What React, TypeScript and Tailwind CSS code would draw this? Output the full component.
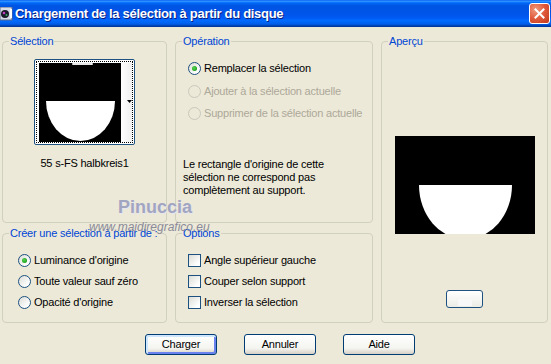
import React from "react";

function Radio({ checked = false, disabled = false }: { checked?: boolean; disabled?: boolean }) {
  return (
    <span
      className={
        "relative inline-flex items-center justify-center w-[13px] h-[13px] rounded-full border shrink-0 " +
        (disabled
          ? "border-[#CAC8BB] bg-[#ECE9D8]"
          : "border-[#1C5180] bg-[linear-gradient(135deg,#DCDCD7,#FFFFFF_80%)]")
      }
    >
      {checked && <span className="w-[5px] h-[5px] rounded-full bg-[radial-gradient(circle_at_40%_40%,#55D551,#21A121_70%)]" />}
    </span>
  );
}

function Check() {
  return (
    <span className="inline-block w-[13px] h-[13px] border border-[#1C5180] bg-[linear-gradient(135deg,#DCDCD7,#FFFFFF_80%)] shrink-0" />
  );
}

function Legend({ children }: { children: React.ReactNode }) {
  return <legend className="ml-[6px] px-[1px] text-[#0046D5] leading-[13px]">{children}</legend>;
}

function Btn({ children, def = false }: { children: React.ReactNode; def?: boolean }) {
  return (
    <button
      className={
        "w-[72px] h-[21px] rounded-[3px] border border-[#003C74] bg-[linear-gradient(to_bottom,#FFFFFF,#F4F4F0_70%,#D6D0C5)] text-[11px] leading-[13px] text-black " +
        (def ? "shadow-[inset_1px_1px_0_1px_#CEE7FF,inset_-1px_-1px_0_1px_#6982EE]" : "")
      }
    >
      {children}
    </button>
  );
}

export default function App() {
  return (
    <div className="relative w-[551px] h-[364px] overflow-hidden bg-[#ECE9D8] font-['Liberation_Sans',Arial,sans-serif] text-[11px] tracking-[-0.2px] text-black">
      {/* Title bar */}
      <div className="h-[27px] flex items-center bg-[linear-gradient(to_bottom,#0058EE_0%,#3593FF_4%,#288EFF_6%,#127DFF_8%,#036FFC_10%,#0262EE_14%,#0057E5_20%,#0054E3_24%,#0055EB_56%,#005BF5_66%,#026AFE_76%,#0062EF_86%,#0052D6_92%,#0040AB_96%,#003092_100%)]">
        <svg width="13" height="14" viewBox="0 0 13 14" className="ml-0 mt-[1px] shrink-0">
          <rect x="0" y="0" width="12" height="13" fill="#D8DCE6" stroke="#5A6A8A" strokeWidth="1" />
          <circle cx="5" cy="7" r="4" fill="#1A1A2A" />
          <circle cx="4" cy="6" r="1.3" fill="#C040C0" />
          <circle cx="6.5" cy="8" r="1" fill="#30B060" />
          <rect x="10" y="2" width="2" height="9" fill="#FFFFFF" />
        </svg>
        <span className="ml-[2px] text-white font-bold text-[13px] tracking-[-0.3px] [text-shadow:1px_1px_0_#0A1E80] font-['Liberation_Sans',Arial,sans-serif]">
          Chargement de la sélection à partir du disque
        </span>
        <div className="ml-auto mr-[1px] w-[21px] h-[21px] rounded-[3px] border border-white bg-[radial-gradient(circle_at_30%_30%,#F09A7C,#E0583A_50%,#C0391B)] flex items-center justify-center">
          <svg width="11" height="11" viewBox="0 0 11 11">
            <path d="M1.5 1.5 L9.5 9.5 M9.5 1.5 L1.5 9.5" stroke="white" strokeWidth="2" strokeLinecap="square" />
          </svg>
        </div>
      </div>

      {/* Body */}
      <div className="flex pt-[8px] pl-[2px] gap-[8px]">
        {/* Left column */}
        <div className="flex flex-col gap-[4px] w-[165px]">
          <fieldset className="h-[188px] border border-[#D0D0BF] rounded-[4px]">
            <Legend>Sélection</Legend>
            <div className="flex flex-col">
              <div className="ml-[31px] mt-[11px] w-[101px] h-[86px] border border-[#1C5180] rounded-[2px] bg-white p-px">
                <div className="w-full h-full border border-dotted border-black flex pl-[2px] pt-px">
                  <svg width="82" height="79" viewBox="0 0 82 79" className="shrink-0">
                    <rect width="82" height="79" fill="#000" />
                    <rect x="33" y="0" width="21" height="2" rx="1" fill="#E8E8E8" />
                    <path d="M7 38 L76 38 A34.5 40 0 0 1 7 38 Z" fill="#fff" />
                  </svg>
                  <div className="flex-1 bg-[linear-gradient(to_right,#FFFFFF,#F0F0F0)] relative">
                    <svg width="5" height="3" viewBox="0 0 5 3" className="absolute left-[6px] top-[37px]">
                      <path d="M0 0 L5 0 L2.5 3 Z" fill="#000" />
                    </svg>
                  </div>
                </div>
              </div>
              <div className="mt-[12px] text-center leading-[13px]">55 s-FS halbkreis1</div>
            </div>
          </fieldset>
          <fieldset className="h-[96px] border border-[#D0D0BF] rounded-[4px]">
            <Legend>Créer une sélection à partir de :</Legend>
            <div className="flex flex-col gap-[8px] pl-[15px] pt-[14px]">
              <div className="flex items-center gap-[3px] leading-[13px]"><Radio checked /><span>Luminance d'origine</span></div>
              <div className="flex items-center gap-[3px] leading-[13px]"><Radio /><span>Toute valeur sauf zéro</span></div>
              <div className="flex items-center gap-[3px] leading-[13px]"><Radio /><span>Opacité d'origine</span></div>
            </div>
          </fieldset>
        </div>

        {/* Middle column */}
        <div className="flex flex-col gap-[4px] w-[198px]">
          <fieldset className="h-[188px] border border-[#D0D0BF] rounded-[4px]">
            <Legend>Opération</Legend>
            <div className="flex flex-col pl-[12px] pt-[14px]">
              <div className="flex items-center gap-[3px] leading-[13px]"><Radio checked /><span>Remplacer la sélection</span></div>
              <div className="mt-[10px] flex items-center gap-[3px] leading-[13px] text-[#ACA899]"><Radio disabled /><span>Ajouter à la sélection actuelle</span></div>
              <div className="mt-[9px] flex items-center gap-[3px] leading-[13px] text-[#ACA899]"><Radio disabled /><span>Supprimer de la sélection actuelle</span></div>
            </div>
            <p className="ml-[7px] mt-[38px] leading-[13px] w-[170px]">
              Le rectangle d'origine de cette sélection ne correspond pas complètement au support.
            </p>
          </fieldset>
          <fieldset className="h-[96px] border border-[#D0D0BF] rounded-[4px]">
            <Legend>Options</Legend>
            <div className="flex flex-col gap-[8px] pl-[12px] pt-[14px]">
              <div className="flex items-center gap-[3px] leading-[13px]"><Check /><span>Angle supérieur gauche</span></div>
              <div className="flex items-center gap-[3px] leading-[13px]"><Check /><span>Couper selon support</span></div>
              <div className="flex items-center gap-[3px] leading-[13px]"><Check /><span>Inverser la sélection</span></div>
            </div>
          </fieldset>
        </div>

        {/* Right column */}
        <fieldset className="w-[167px] h-[288px] border border-[#D0D0BF] rounded-[4px]">
          <Legend>Aperçu</Legend>
          <div className="flex flex-col items-center">
            <svg width="140" height="98" viewBox="0 0 140 98" className="mt-[88px]">
              <rect width="140" height="98" fill="#000" />
              <path d="M24 49 L117 49 A46.5 54.3 0 0 1 24 49 Z" fill="#fff" />
            </svg>
            <div className="mt-[56px] w-[37px] h-[18px] rounded-[3px] border border-[#1C5180] bg-[linear-gradient(to_bottom,#FFFFFF,#ECECE6)] flex items-end justify-center">
              <div className="w-[14px] h-[7px] bg-[#F8F8F8] mb-px" />
            </div>
          </div>
        </fieldset>
      </div>

      {/* Buttons */}
      <div className="flex gap-[27px] ml-[145px] mt-[11px]">
        <Btn def>Charger</Btn>
        <Btn>Annuler</Btn>
        <Btn>Aide</Btn>
      </div>

      {/* Watermark */}
      <div className="absolute left-[118px] top-[198px] text-[18px] font-bold tracking-normal text-[#A2A5C0] leading-[18px] [text-shadow:1px_1px_0_#E6E6F0] pointer-events-none">
        Pinuccia
      </div>
      <div className="absolute left-[89px] top-[222px] text-[12px] italic tracking-normal text-[#8A8A98] leading-[11px] pointer-events-none">
        www.maidiregrafico.eu
      </div>
    </div>
  );
}
